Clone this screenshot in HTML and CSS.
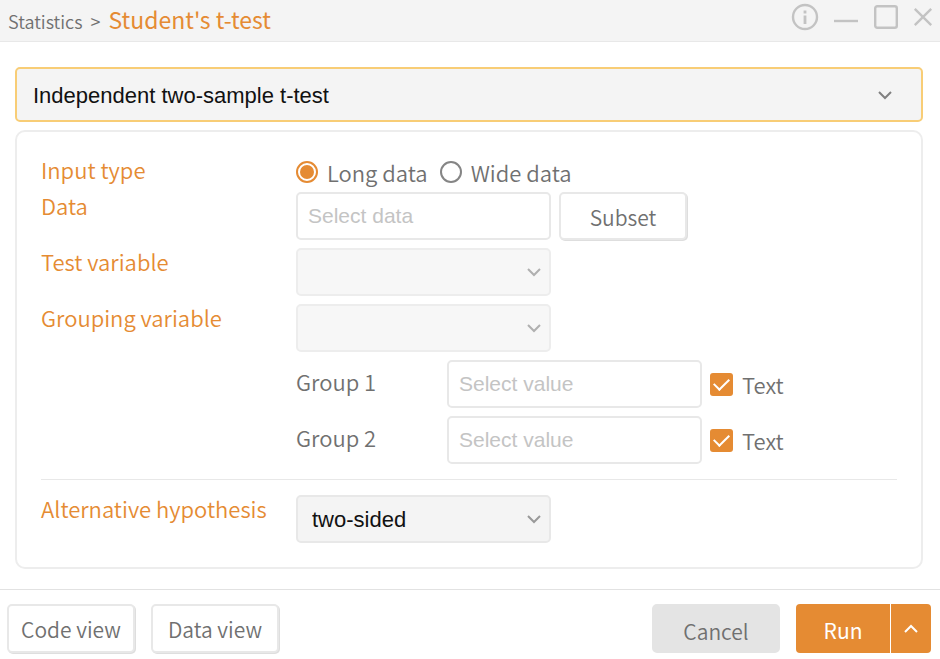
FILE: index.html
```html
<!DOCTYPE html>
<html lang="en">
<head>
<meta charset="utf-8">
<meta name="viewport" content="width=device-width, initial-scale=1">
<title>Student's t-test</title>
<link rel="stylesheet" href="styles.css">
</head>
<body>
<header class="titlebar">
  <nav class="crumbs"><a class="crumb" href="#">Statistics</a><span class="sep">&gt;</span><h1 class="title">Student's t-test</h1></nav>
  <div class="window-tools">
    <button type="button" class="tool" aria-label="Info"><svg width="26" height="28" viewBox="1 0 26 28"><circle cx="14" cy="14" r="12"/><path d="M14 12.500v8.500M14 7.500v3" stroke-width="2.800"/></svg></button>
    <button type="button" class="tool" aria-label="Minimize"><svg width="24" height="28" viewBox="0 0 24 28"><path d="M0 18h24"/></svg></button>
    <button type="button" class="tool" aria-label="Maximize"><svg width="24" height="28" viewBox="0 0 24 28"><rect x="1.200" y="3.200" width="21.600" height="21.600" rx="2"/></svg></button>
    <button type="button" class="tool" aria-label="Close"><svg width="18" height="28" viewBox="0 0 18 28"><path d="M.8 5.800l16.400 16.400M17.200 5.800L.8 22.200"/></svg></button>
  </div>
</header>
<main class="content">
  <div class="select select-main">
    <select aria-label="Test type"><option>Independent two-sample t-test</option></select>
    <svg class="chevron" width="14" height="9" viewBox="0 0 14 9"><path d="M1 1l6 6 6-6"/></svg>
  </div>
  <form class="panel">
    <div class="row row-type" role="radiogroup" aria-labelledby="type-label">
      <span class="label" id="type-label">Input type</span>
      <div class="field radios">
        <label class="choice"><input type="radio" name="type" checked>Long data</label>
        <label class="choice"><input type="radio" name="type">Wide data</label>
      </div>
    </div>
    <div class="row">
      <label class="label" for="data">Data</label>
      <div class="field"><input class="text" id="data" type="text" placeholder="Select data"><button type="button" class="btn">Subset</button></div>
    </div>
    <div class="row">
      <label class="label" for="test">Test variable</label>
      <div class="field"><div class="select disabled"><select id="test" disabled></select><svg class="chevron" width="14" height="9" viewBox="0 0 14 9"><path d="M1 1l6 6 6-6"/></svg></div></div>
    </div>
    <div class="row">
      <label class="label" for="grouping">Grouping variable</label>
      <div class="field"><div class="select disabled"><select id="grouping" disabled></select><svg class="chevron" width="14" height="9" viewBox="0 0 14 9"><path d="M1 1l6 6 6-6"/></svg></div></div>
    </div>
    <div class="row row-group">
      <label class="sublabel" for="group1">Group 1</label>
      <div class="field"><input class="text" id="group1" type="text" placeholder="Select value"><label class="choice"><input type="checkbox" checked>Text</label></div>
    </div>
    <div class="row row-group">
      <label class="sublabel" for="group2">Group 2</label>
      <div class="field"><input class="text" id="group2" type="text" placeholder="Select value"><label class="choice"><input type="checkbox" checked>Text</label></div>
    </div>
    <hr class="rule">
    <div class="row">
      <label class="label" for="alt">Alternative hypothesis</label>
      <div class="field"><div class="select"><select id="alt"><option>two-sided</option></select><svg class="chevron" width="14" height="9" viewBox="0 0 14 9"><path d="M1 1l6 6 6-6"/></svg></div></div>
    </div>
  </form>
</main>
<footer class="actions">
  <button type="button" class="btn">Code view</button>
  <button type="button" class="btn">Data view</button>
  <span class="spacer"></span>
  <button type="button" class="btn btn-cancel">Cancel</button>
  <div class="split">
    <button type="button" class="run">Run</button>
    <button type="button" class="more" aria-label="More run options"><svg width="14" height="9" viewBox="0 0 14 9"><path d="M1 8l6-6 6 6"/></svg></button>
  </div>
</footer>
</body>
</html>
```
FILE: styles.css
```css
:root {
  --accent: #e58b33;
  --line: #e8e8e8;
  --text: #707070;
  --ui: "Noto Sans CJK KR", "Noto Sans", sans-serif;
  --form: "Liberation Sans", Arial, sans-serif;
}

* { box-sizing: border-box; }

body {
  margin: 0;
  min-height: 100vh;
  display: flex;
  flex-direction: column;
  background: #fff;
  color: var(--text);
  font: 350 22px/26px var(--ui);
}

button, input, select { font: inherit; color: inherit; margin: 0; }

.titlebar {
  display: flex;
  justify-content: space-between;
  height: 42px;
  padding: 0 8px;
  background: #f4f4f4;
  border-bottom: 1px solid var(--line);
}
.crumbs { display: flex; align-items: baseline; gap: 8px; padding-top: 6px; }
.crumb, .sep { color: inherit; font-size: 18px; text-decoration: none; }
.title { margin: 0; font-size: 23px; font-weight: 400; line-height: 26px; color: var(--accent); }
.window-tools { display: flex; gap: 16px; padding-top: 3px; }
.tool { display: flex; align-items: flex-start; padding: 0; border: 0; background: none; }
.tool svg { overflow: visible; fill: none; stroke: #c3c3c3; stroke-width: 2.4; }

.content { flex: 1; display: flex; flex-direction: column; gap: 8px; padding: 25px 17px 19px 15px; }

.select { position: relative; width: 255px; }
.select select {
  appearance: none;
  display: block;
  width: 100%;
  height: 48px;
  padding: 2px 40px 0 14px;
  border: 2px solid var(--line);
  border-radius: 5px;
  background: #f4f4f4;
  color: #111;
  font: 22px/30px var(--form);
  opacity: 1;
}
.chevron {
  position: absolute;
  right: 10px;
  top: 50%;
  margin-top: -4px;
  fill: none;
  stroke: #999;
  stroke-width: 2;
  pointer-events: none;
}
.select.disabled select { background: #f7f7f7; border-color: #ededed; }
.disabled .chevron { stroke: #b0b0b0; }
.select-main { width: 100%; }
.select-main select { height: 55px; padding-left: 16px; border-color: #f8cd76; }
.select-main .chevron { right: 31px; stroke: #808080; }

.panel {
  display: flex;
  flex-direction: column;
  gap: 8px;
  padding: 24px;
  border: 2px solid #ededed;
  border-radius: 10px;
}
.row { display: grid; grid-template-columns: 255px 1fr; }
.row-type { margin-bottom: -8px; height: 36px; }
.row-group { grid-template-columns: 151px 1fr; padding-left: 255px; }
.label { color: var(--accent); }
.sublabel { padding-top: 8px; }
.field { display: flex; gap: 8px; align-items: center; }
.radios { gap: 12px; align-items: flex-start; padding-top: 3px; }

.text {
  width: 255px;
  height: 48px;
  padding: 0 10px;
  border: 2px solid var(--line);
  border-radius: 5px;
  background: #fff;
  font: 21px/30px var(--form);
}
.text::placeholder { color: #c4c4c4; opacity: 1; }

.choice { display: flex; align-items: center; gap: 9px; white-space: nowrap; }
.choice input { appearance: none; display: grid; place-items: center; flex: none; width: 22px; height: 22px; }
.choice input[type="radio"] { border: 2px solid #858585; border-radius: 50%; }
.choice input[type="radio"]:checked { border-color: var(--accent); }
.choice input[type="radio"]:checked::after {
  content: "";
  width: 14px;
  height: 14px;
  border-radius: 50%;
  background: var(--accent);
}
.choice input[type="checkbox"] { width: 23px; height: 23px; border-radius: 3px; background: var(--accent); }
.choice input[type="checkbox"]:checked::after {
  content: "";
  width: 13px;
  height: 7px;
  border: solid #fff;
  border-width: 0 0 2px 2px;
  transform: translateY(-2px) rotate(-45deg);
}

.rule { width: 100%; margin: 7px 0; border: 0; border-top: 1px solid var(--line); }

.btn {
  width: 128px;
  height: 48px;
  padding: 2px 0 0;
  border: 2px solid var(--line);
  border-radius: 5px;
  background: #fff;
  box-shadow: 1px 1px 0 #dedede;
  font-size: 21px;
}
.actions { display: flex; gap: 16px; padding: 14px 9px 6px 7px; border-top: 1px solid #e2e2e2; }
.actions .btn { height: 49px; padding: 0; }
.spacer { flex: 1; }
.actions .btn-cancel { padding-top: 4px; background: #e4e4e4; border-color: #e4e4e4; box-shadow: none; }
.split { display: flex; gap: 1px; }
.run, .more { height: 49px; border: 0; background: var(--accent); color: #fff; }
.run { width: 94px; padding: 2px 0 0; border-radius: 4px 0 0 4px; font-size: 21px; font-weight: 400; }
.more { display: grid; place-items: center; width: 40px; padding: 0; border-radius: 0 4px 4px 0; }
.more svg { fill: none; stroke: #fff; stroke-width: 2; }
```
